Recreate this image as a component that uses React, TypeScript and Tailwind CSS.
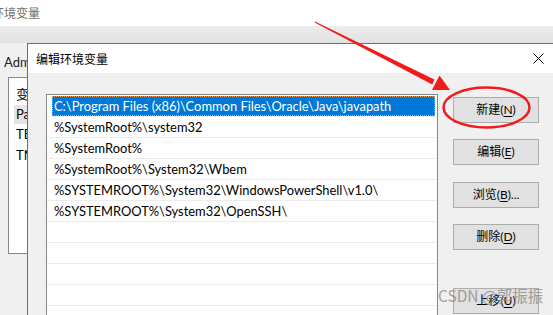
import React from "react";

const paths = [
  "C:\\Program Files (x86)\\Common Files\\Oracle\\Java\\javapath",
  "%SystemRoot%\\system32",
  "%SystemRoot%",
  "%SystemRoot%\\System32\\Wbem",
  "%SYSTEMROOT%\\System32\\WindowsPowerShell\\v1.0\\",
  "%SYSTEMROOT%\\System32\\OpenSSH\\",
  "",
  "",
  "",
  "",
  "",
];

function Btn({ label, k, rest, className }: { label: string; k: string; rest: string; className?: string }) {
  return (
    <div
      className={
        "w-[86px] h-[26px] shrink-0 bg-[#e1e1e1] border border-[#adadad] flex items-center justify-center text-[12px] text-black leading-none " +
        (className ?? "")
      }
    >
      <span>
        {label}(<span className="underline underline-offset-2">{k}</span>){rest}
      </span>
    </div>
  );
}

export default function App() {
  return (
    <div
      className="relative w-[553px] h-[315px] overflow-hidden bg-[#f0f0f0]"
      style={{ fontFamily: 'Lato, "Noto Sans CJK SC", sans-serif' }}
    >
      {/* background window */}
      <div className="h-[26px] bg-white flex items-center">
        <span className="ml-[-8px] text-[12px] text-[#6f6f6f]" style={{ fontFamily: '"Noto Sans CJK SC", sans-serif' }}>
          环境变量
        </span>
      </div>
      <div className="h-[17px] bg-gradient-to-b from-[#ececec] to-[#e2e2e2]" />
      <div className="pl-[4px] pt-[13px] text-[13px] text-[#222] leading-none">Adm</div>
      <div className="ml-[8px] mt-[8px] w-[60px] h-[177px] bg-white border border-[#828790] text-[13px] text-black">
        <div className="pl-[7px] pt-[6px] h-[27px]" style={{ fontFamily: '"Noto Sans CJK SC", sans-serif' }}>
          变
        </div>
        <div className="ml-[5px] pl-[2px] h-[19px] bg-[#e5e5e5] flex items-center">Pa</div>
        <div className="pl-[7px] h-[21px] flex items-center pt-[1px]">TE</div>
        <div className="pl-[7px] h-[21px] flex items-center pt-[1px]">TN</div>
      </div>

      {/* dialog */}
      <div className="absolute left-[27px] top-[43px] w-[534px] h-[300px] border-l border-t border-[#6e6e6e] bg-[#f0f0f0]">
        <div className="h-[29px] bg-white flex items-center">
          <span className="flex-1 pl-[8px] text-[12px] text-black" style={{ fontFamily: '"Noto Sans CJK SC", sans-serif' }}>
            编辑环境变量
          </span>
          <div className="w-[46px] h-full flex items-center justify-center">
            <svg width="11" height="11" viewBox="0 0 11 11">
              <path d="M0.5 0.5 L10.5 10.5 M10.5 0.5 L0.5 10.5" stroke="#000" strokeWidth="1" />
            </svg>
          </div>
        </div>
        <div className="flex pl-[18px] pt-[21px]">
          <div className="w-[392px] h-[240px] shrink-0 bg-white border border-[#828790] pt-[1px]">
            {paths.map((p, i) => (
              <div key={i} className="h-[21px] border-b border-[#ececec] flex">
                {i === 0 ? (
                  <div className="ml-[5px] mr-[2px] flex-1 bg-[#0078d7] outline-1 outline-dotted outline-[#e8a060] -outline-offset-1 text-white text-[12.9px] pl-[2px] pt-[1px] flex items-center whitespace-nowrap">
                    {p}
                  </div>
                ) : (
                  <div className="pl-[7px] pt-[1px] text-[12.9px] text-black flex items-center whitespace-nowrap">{p}</div>
                )}
              </div>
            ))}
          </div>
          <div className="ml-[15px] mt-[3px] flex flex-col">
            <Btn label="新建" k="N" rest="" />
            <Btn label="编辑" k="E" rest="" className="mt-[16px]" />
            <Btn label="浏览" k="B" rest="..." className="mt-[17px]" />
            <Btn label="删除" k="D" rest="" className="mt-[16px]" />
            <Btn label="上移" k="U" rest="" className="mt-[38px]" />
          </div>
        </div>
      </div>

      {/* watermark */}
      <div
        className="absolute left-[438px] top-[288px] text-[15.5px] text-[#8a8a8a]/80 leading-none whitespace-nowrap"
        style={{ fontFamily: '"Noto Sans CJK SC", sans-serif' }}
      >
        CSDN @郭振振
      </div>

      {/* red annotations */}
      <svg className="absolute left-0 top-0 pointer-events-none" width="553" height="315" viewBox="0 0 553 315">
        <polygon points="315,21.6 434.4,79.6 432.2,84.6 314.6,22.4" fill="#f01c1c" />
        <polygon points="450,90 439.5,75.5 432,90" fill="#f01c1c" />
        <ellipse cx="486.5" cy="107.5" rx="43" ry="20" fill="none" stroke="#f01c1c" strokeWidth="2.5" />
      </svg>
    </div>
  );
}
